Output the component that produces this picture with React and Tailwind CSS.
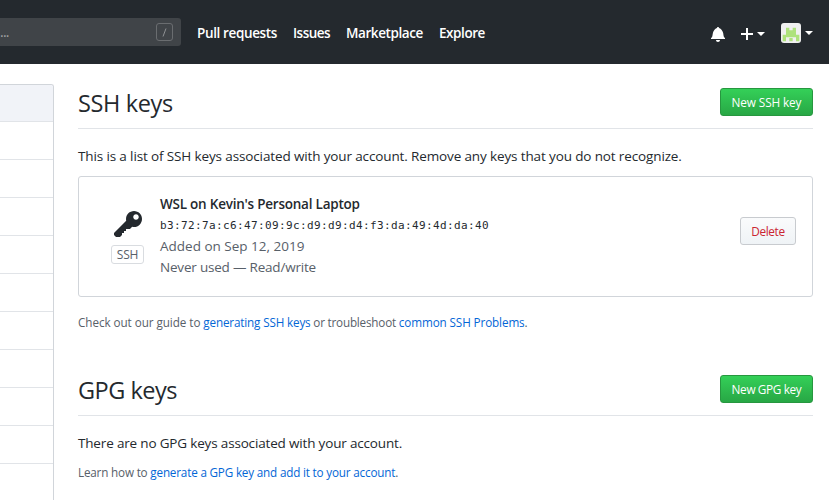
function Caret() {
  return <span className="block h-0 w-0 border-x-4 border-t-4 border-x-transparent border-t-white" />;
}

function Octicon({ d, w, h, box, className }) {
  return (
    <svg width={w} height={h} viewBox={box} fill="currentColor" className={className} aria-hidden="true">
      <path fillRule="evenodd" d={d} />
    </svg>
  );
}

const KEY =
  "M12.83 2.17C12.08 1.42 11.14 1.03 10 1c-1.13.03-2.08.42-2.83 1.17S6.04 3.86 6.01 5c0 .3.03.59.09.89L0 12v1l1 1h2l1-1v-1h1v-1h1v-1h2l1.09-1.11c.3.08.59.11.91.11 1.14-.03 2.08-.42 2.83-1.17S13.97 6.14 14 5c-.03-1.14-.42-2.08-1.17-2.83zM11 5.38c-.77 0-1.38-.61-1.38-1.38 0-.77.61-1.38 1.38-1.38.77 0 1.38.61 1.38 1.38 0 .77-.61 1.38-1.38 1.38z";
const BELL =
  "M14 12v1H0v-1l.73-.58c.77-.77.81-2.55 1.19-4.42C2.69 3.23 6 2 6 2c0-.55.45-1 1-1s1 .45 1 1c0 0 3.39 1.23 4.16 5 .38 1.88.42 3.66 1.19 4.42l.66.58H14zm-7 4c1.11 0 2-.89 2-2H5c0 1.11.89 2 2 2z";
const PLUS = "M12 9H7v5H5V9H0V7h5V2h2v5h5v2z";

function Header() {
  return (
    <header className="flex h-16 shrink-0 items-start bg-[#24292e] text-white">
      <div className="mt-[18px] flex h-7 w-[181px] items-center rounded-r-[3px] bg-[#404448] pr-2">
        <span className="flex-1 text-[14px] leading-5 tracking-[-0.8px] text-[#a0a3a5]">...</span>
        <span className="flex h-[18px] w-[17px] items-center justify-center rounded-[3px] border border-[#6a6d70] text-[#8e9193]">
          <svg width="5" height="9" viewBox="0 0 5 9" stroke="currentColor" fill="none">
            <path d="M4 .5 1 8.5" />
          </svg>
        </span>
      </div>
      <nav className="ml-4 mt-[23px] flex whitespace-nowrap text-[13.5px] font-semibold leading-[21px]">
        <a className="w-24 tracking-[-0.37px]">Pull requests</a>
        <a className="w-[53px] tracking-[-0.53px]">Issues</a>
        <a className="w-[93px] tracking-[-0.41px]">Marketplace</a>
        <a className="tracking-[-0.44px]">Explore</a>
      </nav>
      <div className="ml-auto mr-4 mt-[23px] flex items-start">
        <Octicon d={BELL} w={14} h={16} box="0 0 14 16" className="mr-4 mt-[3px]" />
        <Octicon d={PLUS} w={12} h={16} box="0 0 12 16" className="mr-1 mt-[3px]" />
        <span className="mr-4 mt-[9px]"><Caret /></span>
        <svg width="20" height="20" viewBox="0 0 60 60" className="mr-1">
          <rect width="60" height="60" rx="9" fill="#f0f0f0" />
          <path
            fill="#aee27c"
            d="M15 14h10v8h10v-8h10v21h10v20H45V43H15v12H5V35h10zM25 45h10v10H25z"
          />
        </svg>
        <span className="mt-2"><Caret /></span>
      </div>
    </header>
  );
}

function Sidebar() {
  return (
    <aside className="mt-5 w-[54px] shrink-0 overflow-hidden rounded-tr-[3px] border-r border-t border-[#d1d5da]">
      <div className="h-[37px] border-b border-[#e1e4e8] bg-[#f1f3f8]" />
      {[1, 2, 3, 4, 5, 6, 7, 8, 9].map((n) => (
        <div key={n} className="h-[38px] border-b border-[#e1e4e8]" />
      ))}
      <div className="h-[38px]" />
    </aside>
  );
}

function SectionHead({ children, action }) {
  return (
    <div className="flex h-[41px] items-start justify-between border-b border-[#e1e4e8]">
      {children}
      <button className="flex h-7 w-[93px] items-center justify-center whitespace-nowrap rounded-[3px] border border-[#27973f] bg-linear-to-b from-[#34d058] to-[#28a745] text-[11.8px] font-medium leading-5 text-white">
        {action}
      </button>
    </div>
  );
}

export default function App() {
  return (
    <div className="flex h-[500px] w-[829px] flex-col overflow-hidden bg-white font-['Open_Sans',sans-serif] text-[#24292e]">
      <Header />
      <div className="flex min-h-0 flex-1">
        <Sidebar />
        <main className="ml-6 w-[735px] pt-6 whitespace-nowrap">
          <SectionHead action={<span className="tracking-[-0.12px]">New SSH key</span>}>
            <h2 className="-mt-px text-[23.5px] leading-8 tracking-[-0.36px]">SSH keys</h2>
          </SectionHead>
          <p className="mt-[17px] text-[13.5px] leading-[21px] tracking-[-0.13px]">
            This is a list of SSH keys associated with your account. Remove any keys that you do not recognize.
          </p>
          <div className="mt-[9px] flex h-[121px] items-start rounded-[3px] border border-[#d1d5da] pr-4">
            <div className="ml-8 mt-8 flex w-[33px] flex-col items-center">
              <Octicon d={KEY} w={28} h={32} box="0 0 14 16" className="ml-px" />
              <span className="mt-[4px] flex h-[19px] w-[33px] items-center justify-center rounded-[3px] border border-[#d9dce0] text-[12px] tracking-[-0.2px] text-[#586069]">
                SSH
              </span>
            </div>
            <div className="ml-4 mt-[17px] flex-1 text-[13.5px] leading-[21px] text-[#586069]">
              <div className="font-semibold tracking-[-0.23px] text-[#24292e]">WSL on Kevin's Personal Laptop</div>
              <div className="font-['DejaVu_Sans_Mono',monospace] text-[11px] tracking-[0.38px] text-[#24292e]">
                b3:72:7a:c6:47:09:9c:d9:d9:d4:f3:da:49:4d:da:40
              </div>
              <div>Added on Sep 12, 2019</div>
              <div className="tracking-[-0.2px]">Never used — Read/write</div>
            </div>
            <button className="mt-10 flex h-7 w-14 items-center justify-center rounded-[3px] border border-[#c8cbcf] bg-linear-to-b from-[#fafbfc] to-[#eff3f6] pt-px text-[11.8px] font-medium tracking-[-0.35px] text-[#cb2431]">
              Delete
            </button>
          </div>
          <p className="mt-4 text-[11.7px] leading-[18px] tracking-[-0.06px] text-[#586069]">
            Check out our guide to <a className="tracking-[-0.16px] text-[#0366d6]">generating SSH keys</a>
            <span className="tracking-[-0.2px]"> or troubleshoot </span>
            <a className="tracking-[-0.11px] text-[#0366d6]">common SSH Problems</a>.
          </p>
          <div className="mt-11">
            <SectionHead action={<span className="tracking-[-0.36px]">New GPG key</span>}>
              <h2 className="-mt-px text-[23.5px] leading-8 tracking-[-0.5px]">GPG keys</h2>
            </SectionHead>
          </div>
          <p className="mt-[17px] text-[13.5px] leading-[21px] tracking-[-0.17px]">
            There are no GPG keys associated with your account.
          </p>
          <p className="mt-[9px] text-[11.7px] leading-[18px] tracking-[-0.18px] text-[#586069]">
            Learn how to <a className="text-[#0366d6]">generate a GPG key and add it to your account</a>.
          </p>
        </main>
      </div>
    </div>
  );
}
